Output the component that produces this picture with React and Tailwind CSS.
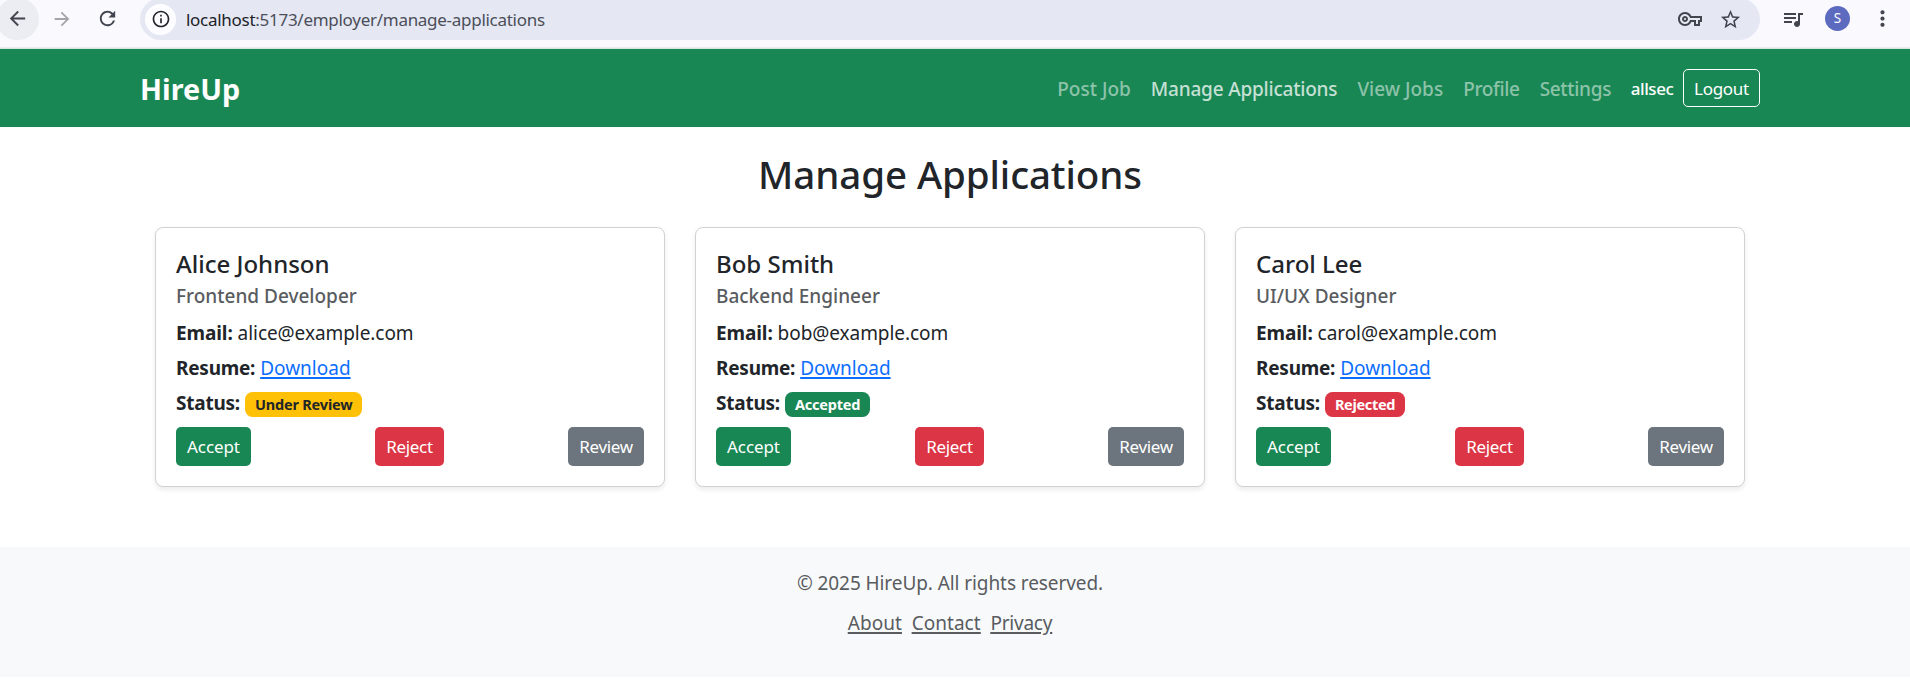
import {
  MdArrowBack,
  MdArrowForward,
  MdInfoOutline,
  MdMoreVert,
  MdOutlineVpnKey,
  MdQueueMusic,
  MdRefresh,
  MdStarBorder,
} from 'react-icons/md';

const applications = [
  { name: 'Alice Johnson', role: 'Frontend Developer', email: 'alice@example.com', status: 'Under Review' },
  { name: 'Bob Smith', role: 'Backend Engineer', email: 'bob@example.com', status: 'Accepted' },
  { name: 'Carol Lee', role: 'UI/UX Designer', email: 'carol@example.com', status: 'Rejected' },
];

const badgeStyles = {
  'Under Review': 'bg-[#ffc107] text-[#212529] tracking-[-0.18px]',
  Accepted: 'bg-[#198754] text-white tracking-[-0.2px]',
  Rejected: 'bg-[#dc3545] text-white tracking-[-0.3px]',
};

function BrowserBar() {
  return (
    <div className="flex h-12 items-start border-b border-[#e9ecf3] bg-[#f9f9fe] text-[#42454e]">
      <div className="-ml-1 -mt-0.5 flex h-[42px] w-[43px] shrink-0 items-center justify-center rounded-full bg-[#ebedf2]">
        <MdArrowBack size={23} className="-mt-px" />
      </div>
      <div className="flex h-[37px] w-[46px] items-center justify-center text-[#a4a5ab]">
        <MdArrowForward size={22} />
      </div>
      <div className="flex h-[37px] w-[45px] items-center justify-center">
        <MdRefresh size={23} />
      </div>
      <div className="-mt-0.5 ml-[10px] flex h-[42px] w-[1620px] shrink-0 items-center rounded-full bg-[#e5e8f3] pl-[5px]">
        <div className="flex size-[31px] items-center justify-center rounded-full bg-[#fdfdff] text-[#24262b]">
          <MdInfoOutline size={20} />
        </div>
        <div className="ml-[10px] pt-0.5 text-[17px] leading-6 tracking-[-0.28px] text-[#4b4e59]">
          <span className="text-[#202227]">localhost</span>:5173/employer/manage-applications
        </div>
        <div className="ml-auto mr-[18px] flex items-center gap-[17px]">
          <MdOutlineVpnKey size={24} />
          <MdStarBorder size={23} />
        </div>
      </div>
      <div className="flex h-[37px] w-[65px] items-center justify-center">
        <MdQueueMusic size={24} />
      </div>
      <div className="mt-1.5 flex size-[25px] items-center justify-center rounded-full bg-[#5c6bc0] text-[13.5px] text-white">
        S
      </div>
      <div className="ml-[19.5px] flex h-[37px] w-[25px] items-center justify-center">
        <MdMoreVert size={25} />
      </div>
    </div>
  );
}

function Navbar() {
  return (
    <header className="border-t border-[#d3e7de] bg-[#198754]">
      <div className="flex h-[78px] items-center pl-[140px] pr-[150px]">
        <div className="pt-0.5 text-[28.8px] font-bold leading-9 text-white">HireUp</div>
        <nav className="ml-auto flex gap-5 pt-0.5 text-[19px] font-medium leading-[30px] text-white/50">
          <a>Post Job</a>
          <a className="tracking-[-0.2px] text-white/75">Manage Applications</a>
          <a>View Jobs</a>
          <a className="tracking-[-0.33px]">Profile</a>
          <a className="tracking-[-0.31px]">Settings</a>
        </nav>
        <span className="ml-[19.5px] pt-px text-[17px] font-medium tracking-[-0.4px] text-white">allsec</span>
        <button className="ml-[9.5px] h-[38px] w-[77px] rounded-[5px] border border-white pt-px text-[17px] tracking-[-0.3px] text-white">
          Logout
        </button>
      </div>
    </header>
  );
}

function Card({ application }) {
  const { name, role, email, status } = application;
  return (
    <article className="flex flex-col rounded-[8px] border border-[#d0d2d4] bg-white px-5 pb-5 pt-[21px] text-[19px] leading-[30px] text-[#212529] shadow-[0_2.5px_5px_rgba(0,0,0,0.075)]">
      <h5 className="text-[24px] font-medium">{name}</h5>
      <h6 className="mt-[5px] font-medium leading-6 text-[#595c5f]">{role}</h6>
      <p className="mt-[10px]">
        <strong className="tracking-[-0.1px]">Email:</strong> <span className="tracking-[-0.06px]">{email}</span>
      </p>
      <p className="mt-[5px]">
        <strong className="tracking-[-0.24px]">Resume:</strong>{' '}
        <a className="text-[#0d6efd] underline decoration-[1.5px] underline-offset-[1.5px] [text-decoration-skip-ink:none]">
          Download
        </a>
      </p>
      <div className="mt-[5px] flex items-start gap-[5.5px]">
        <strong className="tracking-[-0.24px]">Status:</strong>
        <span className={`mt-1 h-[25px] rounded-[7.5px] px-[9.5px] text-[14.5px] font-bold leading-6 ${badgeStyles[status]}`}>
          {status}
        </span>
      </div>
      <div className="mt-[9px] flex justify-between text-[17px] leading-[40px] text-white">
        <button className="h-[39px] w-[75px] rounded-[5px] bg-[#198754] tracking-[-0.1px]">Accept</button>
        <button className="h-[39px] w-[69px] rounded-[5px] bg-[#dc3545] tracking-[-0.3px]">Reject</button>
        <button className="h-[39px] w-[76px] rounded-[5px] bg-[#6c757d] tracking-[-0.3px]">Review</button>
      </div>
    </article>
  );
}

export default function App() {
  return (
    <div className="flex h-[700px] w-[1910px] flex-col overflow-hidden bg-white font-['Noto_Sans','Liberation_Sans',sans-serif]">
      <BrowserBar />
      <Navbar />
      <main className="w-[1900px] pt-[23px]">
        <h2 className="text-center text-[38.5px] font-medium leading-[48px] tracking-[-0.1px] text-[#212529]">
          Manage Applications
        </h2>
        <div className="mt-[29px] grid grid-cols-3 gap-[30px] px-[155px]">
          {applications.map((application) => (
            <Card key={application.name} application={application} />
          ))}
        </div>
      </main>
      <footer className="mt-[60px] h-[130px] shrink-0 bg-[#f8f9fb] text-[19px] leading-[30px] text-[#595c5f]">
        <div className="w-[1900px] pt-[21px] text-center">
          <p className="tracking-[-0.08px]">© 2025 HireUp. All rights reserved.</p>
          <div className="mt-[10px] flex justify-center gap-[10px] underline decoration-[1.5px] underline-offset-[1.5px]">
            <a>About</a>
            <a>Contact</a>
            <a className="tracking-[-0.25px]">Privacy</a>
          </div>
        </div>
      </footer>
    </div>
  );
}
